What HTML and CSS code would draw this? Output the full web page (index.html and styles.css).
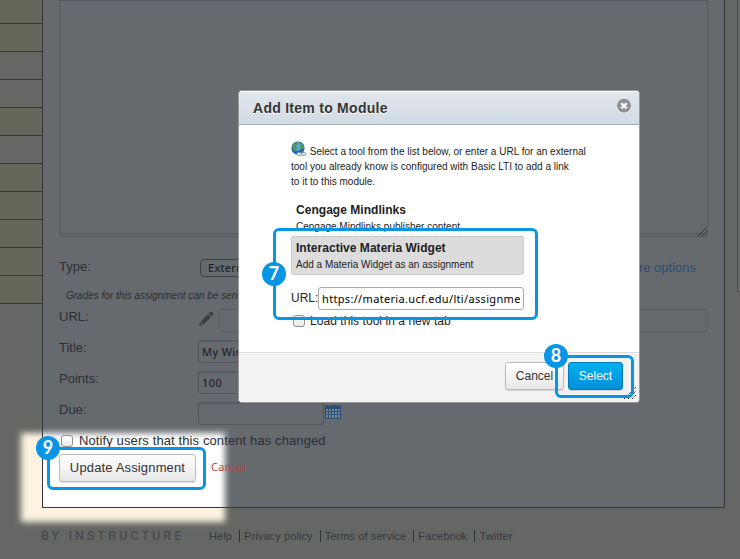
FILE: index.html
```html
<!DOCTYPE html>
<html lang="en">
<head>
<meta charset="utf-8">
<title>Add Item to Module</title>
<link rel="stylesheet" href="styles.css">
</head>
<body>
<div class="spot spot-page"></div>
<div class="page">
  <aside class="calendar">
    <i class="warm first"></i><i class="warm"></i><i></i><i></i><i class="warm"></i><i></i><i class="warm"></i><i class="warm"></i><i class="warm"></i><i class="warm"></i><i class="warm"></i>
  </aside>
  <main class="panel">
    <div class="spot spot-panel"></div>
    <div class="form">
      <div class="editor"><svg class="grip" width="10" height="9" viewBox="0 0 10 9"><path d="M0 9L9 0M4 9L10 3M8 9L10 7"/></svg></div>
      <div class="row type"><label>Type:</label><span class="select">Extern</span><a class="more">more options</a></div>
      <p class="hint">Grades for this assignment can be sent</p>
      <div class="row"><label>URL:</label>
        <svg class="pencil" width="16" height="16" viewBox="0 0 16 16"><path d="M1 15l1-4 3 3zM2.8 10.2l7-7 3 3-7 7zM10.6 2.4l1.4-1.4q1-.7 2 .2l.9.9q.8 1 0 2l-1.3 1.3z"/></svg>
        <span class="input faint"></span></div>
      <div class="row"><label>Title:</label><span class="input">My Widget</span></div>
      <div class="row"><label>Points:</label><span class="input">100</span></div>
      <div class="row"><label>Due:</label><span class="input date"></span>
        <svg class="cal" width="16" height="16" viewBox="0 0 16 16"><path d="M0 2h16v13H0z" fill="#2a4e78"/><path d="M1 5h14v9H1z" fill="#76828c"/><path d="M1 7.5h14M1 10.5h14M3.5 5v9M6.5 5v9M9.5 5v9M12.5 5v9" stroke="#2f5480"/><path d="M0 1.5h16" stroke="#2f4a68" stroke-dasharray="1 1"/></svg></div>
      <div class="notify"><span class="check"></span><span>Notify users that this content has changed</span></div>
      <div class="actions"><span class="button">Update Assignment</span><a class="cancel">Cancel</a></div>
    </div>
  </main>
  <aside class="right"></aside>
</div>
<footer class="footer"><span class="brand">BY INSTRUCTURE</span><nav><a>Help</a><a>Privacy policy</a><a>Terms of service</a><a>Facebook</a><a>Twitter</a></nav></footer>

<section class="dialog">
  <header><h1>Add Item to Module</h1>
    <svg width="16" height="16" viewBox="0 0 16 16"><circle cx="8" cy="8.6" r="7" fill="#fff"/><circle cx="8" cy="7.8" r="7" fill="#929292"/><path d="M5.4 5.2l5.2 5.2M10.6 5.2l-5.2 5.2" stroke="#fff" stroke-width="2.3"/></svg>
  </header>
  <div class="body">
    <p class="intro"><svg class="globe" width="16" height="16" viewBox="0 0 16 16"><circle cx="7" cy="7" r="6.6" fill="#2765a8"/><circle cx="6" cy="5.5" r="4.5" fill="#58a8e0"/><path d="M1.5 4Q4 0 6 1L7 3 5 5 6 8 4 10 2 8zM9 2q4 1 4 5l-2 2-2-3 1-2z" fill="#4a9a4a"/><rect x="6" y="11.5" width="4.5" height="3" rx="1.5" fill="#e8eef4" stroke="#8496aa"/><rect x="10.5" y="11.5" width="4.5" height="3" rx="1.5" fill="#e8eef4" stroke="#8496aa"/></svg><span> Select a tool from the list below, or enter a URL for an external</span><br><span>tool you already know is configured with Basic LTI to add a link</span><br><span>to it to this module.</span></p>
    <div class="tool"><b>Cengage Mindlinks</b><small>Cengage Mindlinks publisher content</small></div>
    <div class="tool active"><b>Interactive Materia Widget</b><small>Add a Materia Widget as an assignment</small></div>
    <div class="url"><label>URL:</label><span>https://materia.ucf.edu/lti/assignme</span></div>
    <div class="tab"><span class="check"></span><span>Load this tool in a new tab</span></div>
  </div>
  <div class="bar"><span class="button">Cancel</span><span class="button primary">Select</span></div>
  <svg class="resize" width="12" height="12" viewBox="0 0 12 12"><path d="M0 12L12 0M4 12L12 4M8 12L12 8"/></svg>
</section>

<div class="callout c7"></div><b class="badge b7">7</b>
<div class="callout c8"></div><b class="badge b8">8</b>
<div class="callout c9"></div><b class="badge b9">9</b>
</body>
</html>
```
FILE: styles.css
```css
* { box-sizing: border-box; }
body { margin: 0; width: 740px; height: 559px; overflow: hidden; position: relative; background: #656764; color: #2b2f33; font: 13px/16px "Liberation Sans", Arial, sans-serif; }
.page { display: grid; grid-template-columns: 42px 683px 12px 3px; height: 508px; position: relative; }
.calendar i { display: block; height: 28px; background: #676665; border-bottom: 1px solid #343639; }
.calendar i.first { height: 24px; }
.calendar .warm { background: #66665a; }
.panel { position: relative; overflow: hidden; background: #666a6f; border: 1px solid #34383d; border-top: 0; }
.spot { position: absolute; filter: blur(3px); width: 204px; height: 89px; }
.spot-page { left: 21px; top: 433px; background: #fcf3e1; }
.spot-panel { left: -22px; top: 433px; background: #fff; }
.form { position: relative; padding: 0 16px; }
.editor { height: 234px; border: 1px solid #55595f; box-shadow: 0 4px #606469; position: relative; }
.grip { position: absolute; right: 0; bottom: -4px; fill: none; stroke: #33373b; }
.row { display: flex; height: 31px; align-items: center; }
.row label { width: 139px; flex: none; align-self: flex-start; margin-top: 4px; }
.row.type { margin-top: 17px; height: 34px; }
.row.type label { margin-top: 8px; }
.select { margin-left: 2px; width: 120px; height: 18px; border: 1px solid #3d4146; border-radius: 4px; padding: 0 7px; font: 11px/16px "Noto Sans", sans-serif; letter-spacing: .3px; color: #17191b; }
.more { margin-left: auto; margin-right: 12px; color: #2c4a69; }
.hint { margin: 0; width: 182px; overflow: hidden; white-space: nowrap; height: 20px; padding: 3px 0 3px 7px; font-style: italic; font-size: 10px; line-height: 15px; }
.pencil { fill: #3a3e43; margin: -3px 4px 0 0; }
.input { width: 240px; height: 23px; border: 1px solid #53575c; border-radius: 3px; padding: 0 3px; font: 11px/21px "Noto Sans", sans-serif; letter-spacing: .4px; color: #17191b; box-shadow: inset 0 1px 1px #5d6166; }
.input.faint { flex: 1; border-color: #5b5f64; box-shadow: none; }
.input.date { width: 126px; }
.cal { margin-left: 1px; margin-top: -3px; }
.notify { display: flex; align-items: center; height: 22px; margin-top: 1px; letter-spacing: .11px; }
.check { width: 12px; height: 12px; border: 1px solid #929292; border-radius: 3px; background: linear-gradient(#fff, #e8e8e8); flex: none; }
.notify .check { margin: 0 6px 0 2px; }
.actions { display: flex; align-items: center; margin-top: 2px; gap: 15px; }
.button { display: block; height: 28px; line-height: 26px; border: 1px solid #bbb; border-radius: 3px; text-align: center; background: linear-gradient(#fff, #e8e8e8); color: #333; box-shadow: 0 1px 1px #0002; }
.actions .button { width: 137px; letter-spacing: .15px; }
.cancel { color: #b8493c; font: 11px/16px "Noto Sans", sans-serif; letter-spacing: .2px; margin-top: -2px; }
.right { grid-column: 4; height: 292px; border-left: 1px solid #494e53; border-bottom: 1px solid #494e53; background: #676a6d; }
.footer { position: relative; display: flex; align-items: center; height: 24px; margin-top: 16px; padding-left: 41px; color: #34383d; font-size: 11px; letter-spacing: .1px; }
.brand { width: 168px; font: 500 12.5px/16px "Roboto", sans-serif; letter-spacing: 3.05px; color: #474b51; }
.footer nav { display: flex; }
.footer a { padding: 0 7px 0 4px; border-left: 1px solid #2e3236; line-height: 12px; }
.footer a:first-child { border: 0; padding-left: 0; }

.dialog { position: absolute; left: 238px; top: 90px; width: 402px; height: 313px; border: 1px solid #999; border-radius: 4px; background: #fff; color: #222; overflow: hidden; display: flex; flex-direction: column; }
.dialog header { height: 34px; display: flex; align-items: center; justify-content: space-between; padding: 0 7px 0 14px; background: linear-gradient(#e0e6ec, #d3dbe3); border-bottom: 1px solid #a1abb3; border-top: 1px solid #fff; }
.dialog header svg { margin-top: -4px; }
.dialog h1 { margin: 0; font-size: 14px; line-height: 20px; color: #333; letter-spacing: .27px; text-shadow: 0 1px #fff; }
.body { flex: 1; padding: 16px 115px 0 52px; }
.intro { margin: 0; height: 58px; font-size: 10px; line-height: 15px; white-space: nowrap; letter-spacing: .01px; }
.globe { vertical-align: -2px; }
.tool { height: 37px; padding: 3px 5px; }
.tool b, .tool small { display: block; white-space: nowrap; }
.tool b { font-size: 12px; line-height: 16px; letter-spacing: .04px; }
.tool small { font-size: 10px; line-height: 18px; }
.tool.active { height: 39px; background: #dcdcdc; border: 1px dotted #bbb; border-radius: 3px; padding: 3px 4px; }
.url { display: flex; align-items: center; height: 23px; margin-top: 12px; font-size: 12px; }
.url label { width: 27px; margin-top: -2px; }
.url span { flex: 1; height: 23px; border: 1px solid #aaa; border-radius: 3px; padding: 0 3px; font: 11px/22px "Noto Sans", sans-serif; color: #000; white-space: nowrap; overflow: hidden; letter-spacing: .33px; }
.tab { display: flex; align-items: center; height: 22px; font-size: 12px; letter-spacing: .05px; white-space: nowrap; }
.tab .check { margin: 0 5px 0 2px; }
.bar { height: 50px; background: #f3f3f3; border-top: 1px solid #ddd; display: flex; justify-content: flex-end; gap: 4px; padding: 9px 16px; font-size: 12px; }
.bar .button { width: 59px; }
.bar .button.primary { width: 55px; color: #fff; border-color: #0079b8; background: linear-gradient(#00b0f0, #0090d8); }
.resize { position: absolute; right: 3px; bottom: 3px; stroke: #222; stroke-dasharray: 1.4 .8; }
.callout { position: absolute; border: 3px solid #0895e6; border-radius: 6px; }
.badge { position: absolute; width: 24px; height: 24px; border-radius: 50%; background: #0895e6; color: #fff; font: bold 18px/23px "Lato", sans-serif; text-align: center; }
.c7 { left: 273px; top: 228px; width: 265px; height: 92px; }
.c8 { left: 555px; top: 355px; width: 79px; height: 43px; }
.c9 { left: 47px; top: 447px; width: 159px; height: 43px; }
.b7 { left: 262px; top: 262px; }
.b8 { left: 544px; top: 344px; }
.b9 { left: 36px; top: 436px; }
```
